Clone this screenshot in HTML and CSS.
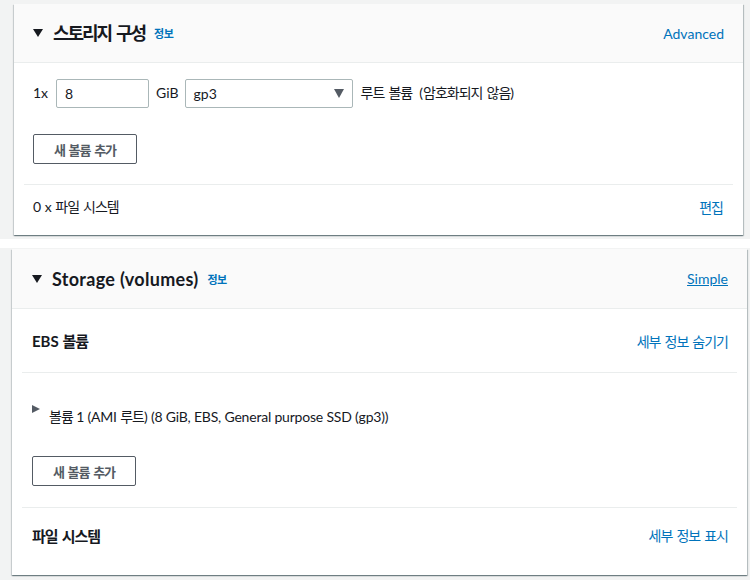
FILE: index.html
```html
<!DOCTYPE html>
<html lang="ko">
<head>
<meta charset="utf-8">
<link rel="stylesheet" href="styles.css">
</head>
<body>
<div class="shot shot-one">
  <section class="panel panel-one">
    <header class="panel-head">
      <div class="head-left">
        <span class="caret-down"></span>
        <h2 class="title ko">스토리지 구성</h2>
        <a class="info ko">정보</a>
      </div>
      <a class="link">Advanced</a>
    </header>
    <div class="panel-body">
      <div class="row-inputs">
        <span class="label">1x</span>
        <div class="input size-input">8</div>
        <span class="label">GiB</span>
        <div class="input select-input"><span>gp3</span><span class="select-arrow"></span></div>
        <span class="label"><span class="ko">루트 볼륨</span>&nbsp; (<span class="ko">암호화되지 않음</span>)</span>
      </div>
      <div class="row-btn one-btn"><button class="btn ko">새 볼륨 추가</button></div>
      <div class="row-line one-line">
        <span class="label">0 x <span class="ko">파일 시스템</span></span>
        <a class="link ko">편집</a>
      </div>
    </div>
  </section>
</div>
<div class="gap"></div>
<div class="shot shot-two">
  <section class="panel panel-two">
    <header class="panel-head head-two">
      <div class="head-left">
        <span class="caret-down"></span>
        <h2 class="title title-en">Storage (volumes)</h2>
        <a class="info ko">정보</a>
      </div>
      <a class="link underline">Simple</a>
    </header>
    <div class="panel-body body-two">
      <div class="row-line ebs-line">
        <h3 class="subtitle">EBS <span class="ko">볼륨</span></h3>
        <a class="link ko">세부 정보 숨기기</a>
      </div>
      <div class="volume-row">
        <span class="caret-right"></span>
        <span class="label vol-text"><span class="ko">볼륨</span> 1 (AMI <span class="ko">루트</span>) (8 GiB, EBS, General purpose SSD (gp3))</span>
      </div>
      <div class="row-btn two-btn"><button class="btn ko">새 볼륨 추가</button></div>
      <div class="row-line fs-line">
        <h3 class="subtitle ko">파일 시스템</h3>
        <a class="link ko">세부 정보 표시</a>
      </div>
    </div>
  </section>
</div>
</body>
</html>
```
FILE: styles.css
```css
* { box-sizing: border-box; }
html, body { margin: 0; padding: 0; background: #ffffff; }
body {
  width: 750px;
  height: 580px;
  overflow: hidden;
  font-family: "Lato", "Noto Sans CJK KR", sans-serif;
  color: #16191f;
  font-size: 14px;
}
.ko { letter-spacing: -1px; word-spacing: 1.5px; }
.shot { background: #f2f3f3; }
.shot-one { height: 239px; padding: 4px 0 0 14px; }
.gap { height: 9px; background: #ffffff; }
.shot-two { height: 332px; padding: 1px 0 0 12px; }

.panel {
  background: #ffffff;
  box-shadow: 0 1px 1px 0 rgba(0, 28, 36, 0.35), 1px 1px 1px 0 rgba(0, 28, 36, 0.2), -1px 1px 1px 0 rgba(0, 28, 36, 0.12);
}
.panel-one { width: 729px; height: 231px; }
.panel-two { width: 735px; height: 326px; }

.panel-head {
  height: 59px;
  background: #fafafa;
  border-bottom: 1px solid #eaeded;
  display: flex;
  align-items: center;
  justify-content: space-between;
  padding: 0 19px 0 19px;
}
.head-two { height: 60px; padding: 0 19px 0 20px; }
.head-left { display: flex; align-items: center; }
.caret-down {
  width: 0; height: 0;
  border-left: 5px solid transparent;
  border-right: 5px solid transparent;
  border-top: 8px solid #16191f;
  margin-right: 10px;
}
.title {
  margin: 0;
  font-size: 18px;
  font-weight: 700;
  line-height: 22px;
}
.title.ko { letter-spacing: -2.1px; word-spacing: 3px; }
.title-en { letter-spacing: 0.3px; }
.info {
  margin-left: 9px;
  font-size: 11px;
  font-weight: 700;
  color: #0073bb;
  letter-spacing: -0.5px;
}
.link { color: #0073bb; font-size: 14px; }
.underline { text-decoration: underline; }

.panel-body { padding: 0 10px; }
.label { font-size: 14px; line-height: 20px; }

.row-inputs {
  display: flex;
  align-items: center;
  padding: 16px 9px 0;
  height: 44px;
}
.input {
  height: 29px;
  border: 1px solid #aab7b8;
  border-radius: 2px;
  display: flex;
  align-items: center;
  padding: 0 8px;
  font-size: 14px;
}
.size-input { width: 93px; margin: 0 7px 0 8px; }
.select-input { width: 168px; margin: 0 8px 0 6px; justify-content: space-between; }
.select-arrow {
  width: 0; height: 0;
  border-left: 5px solid transparent;
  border-right: 5px solid transparent;
  border-top: 9px solid #545b64;
  margin-right: 0;
}
.row-btn { padding: 0 9px; }
.one-btn { padding-top: 27px; height: 78px; border-bottom: 1px solid #eaeded; }
.btn {
  height: 30px;
  width: 104px;
  background: #ffffff;
  border: 1px solid #545b64;
  border-radius: 2px;
  font-family: "Lato", "Noto Sans CJK KR", sans-serif;
  font-size: 13px;
  font-weight: 700;
  color: #545b64;
  padding: 0;
}
.row-line {
  display: flex;
  align-items: center;
  justify-content: space-between;
  padding: 0 10px 0 9px;
}
.one-line { height: 44px; }

.body-two { padding: 0 10px; }
.ebs-line { height: 64px; padding: 0 9px 0 10px; border-bottom: 1px solid #eaeded; }
.subtitle { margin: 0; font-size: 15px; font-weight: 700; }
.volume-row {
  display: flex;
  align-items: flex-start;
  padding: 31px 10px 0;
  height: 83px;
}
.caret-right {
  width: 0; height: 0;
  border-top: 4.5px solid transparent;
  border-bottom: 4.5px solid transparent;
  border-left: 8px solid #545b64;
  margin-top: 1px;
  margin-right: 9px;
}
.vol-text { margin-top: 3px; letter-spacing: -0.2px; }
.two-btn { padding: 0 10px; height: 52px; border-bottom: 1px solid #eaeded; }
.fs-line { height: 54px; padding: 0 9px 0 10px; }
```
